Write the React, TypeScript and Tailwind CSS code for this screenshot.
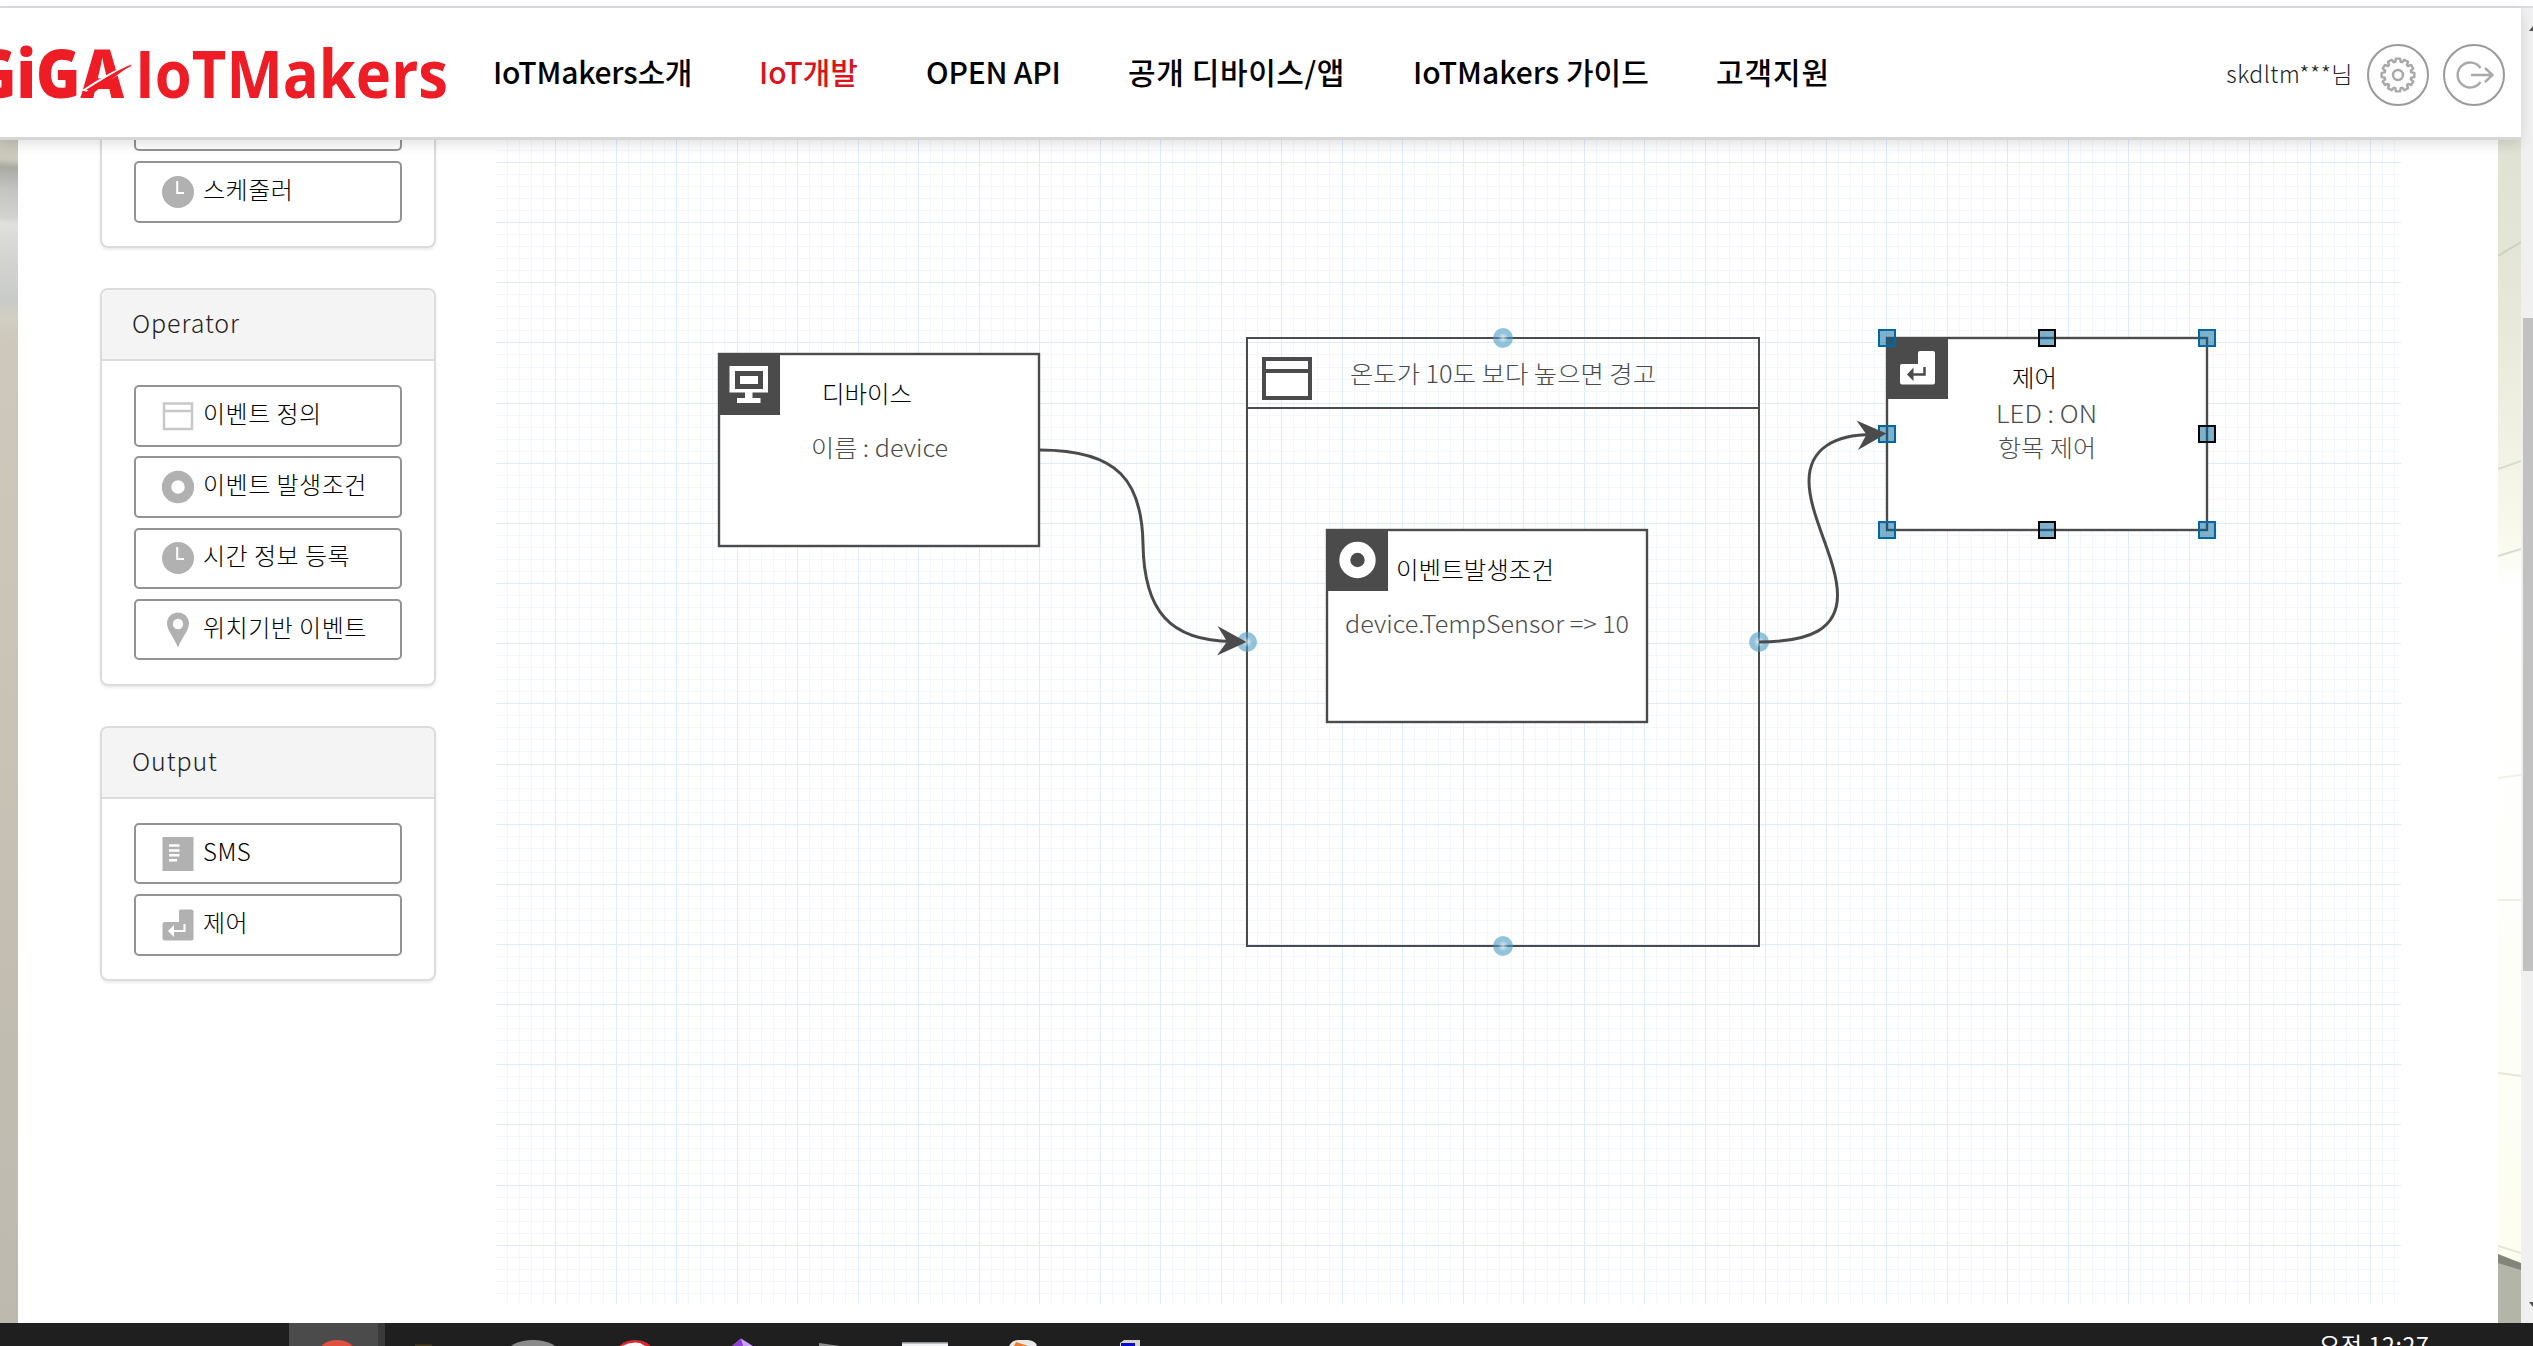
import type { ReactNode } from 'react';

const INK = '#4b4b4b';

/* ---------- Header ---------- */

function Logo() {
  return (
    <svg className="block h-[70px] w-[452px]" viewBox="0 38 452 70" fill="#ee1c25" fontFamily="'Open Sans', 'Noto Sans', sans-serif">
      <text x="-28" y="97.500" fontSize="67" fontWeight="800" textLength="152" lengthAdjust="spacingAndGlyphs">GiGA</text>
      <path d="M84 90 Q108 74 133 63 L132 67 Q112 76 90 92 Z" stroke="#fff" strokeWidth="2" />
      <path d="M80 97 Q104 76 132 64 Q112 79 88 97 Z" />
      <text x="135" y="97.500" fontSize="67" fontWeight="700" textLength="313" lengthAdjust="spacingAndGlyphs">IoTMakers</text>
    </svg>
  );
}

const NAV = [
  { label: 'IoTMakers소개', cls: 'w-[266px] tracking-[-0.2px]' },
  { label: 'IoT개발', cls: 'w-[167px] tracking-[-0.1px] text-[#d9141b]' },
  { label: 'OPEN API', cls: 'w-[202px] tracking-[-0.2px]' },
  { label: '공개 디바이스/앱', cls: 'w-[285px] tracking-[0.6px]' },
  { label: 'IoTMakers 가이드', cls: 'w-[303px] tracking-[0px]' },
  { label: '고객지원', cls: 'w-[200px] tracking-[0.9px]' },
];

function RoundButton({ children }: { children: ReactNode }) {
  return (
    <button className="flex size-[62px] items-center justify-center rounded-full border-2 border-[#9a9a9a] bg-white">{children}</button>
  );
}

function gearPath() {
  const pts: string[] = [];
  const teeth = 12;
  for (let i = 0; i < teeth; i++) {
    const a = (i * 2 * Math.PI) / teeth;
    const at = (r: number, d: number) => `${(18 + r * Math.sin(a + d)).toFixed(2)} ${(18 - r * Math.cos(a + d)).toFixed(2)}`;
    pts.push(at(13.5, -0.2), at(16.5, -0.13), at(16.5, 0.13), at(13.5, 0.2));
  }
  return `M${pts.join(' L')} Z`;
}

function Header() {
  return (
    <header className="relative z-10 flex h-[132px] shrink-0 items-center border-b-[3px] border-[#d6d6d6] bg-white shadow-[0_4px_12px_rgba(0,0,0,0.12)]">
      <Logo />
      <nav className="ml-[41px] flex pb-[2px] text-[30px] font-medium whitespace-nowrap text-black">
        {NAV.map((n) => (
          <a key={n.label} className={n.cls}>
            {n.label}
          </a>
        ))}
      </nav>
      <div className="mt-[4px] mr-4 ml-auto flex items-center">
        <span className="mr-[14px] pb-[2px] text-[23px] font-light tracking-[0.5px] whitespace-nowrap text-[#222]">skdltm***님</span>
        <RoundButton>
          <svg className="size-9" viewBox="0 0 36 36" fill="none" stroke="#a9a9a9" strokeWidth="2.400" strokeLinejoin="round">
            <path d={gearPath()} />
            <circle cx="18" cy="18" r="5" />
          </svg>
        </RoundButton>
        <span className="w-[14px]" />
        <RoundButton>
          <svg className="h-[30px] w-[40px]" viewBox="0 0 40 30" fill="none" stroke="#a9a9a9" strokeWidth="2.400">
            <path d="M26.500 8 A12.500 12.500 0 1 0 26.500 22" />
            <path d="M17 15 H38 M31 8 L38.500 15 L31 22" />
          </svg>
        </RoundButton>
      </div>
    </header>
  );
}

/* ---------- Sidebar ---------- */

const ICON = 'ml-[26px] mr-[9px] h-9 w-8 shrink-0';

function WindowIcon() {
  return (
    <svg className={ICON} viewBox="0 0 32 36" fill="none" stroke="#c8c8c8" strokeWidth="2.500">
      <path d="M2 5.500 H30 V31 H2 Z M2 13 H30" />
    </svg>
  );
}
function RingIcon() {
  return (
    <svg className={ICON} viewBox="0 0 32 36" fill="none" stroke="#b1b1b1" strokeWidth="9.500">
      <circle cx="16" cy="18" r="11.500" />
    </svg>
  );
}
function ClockIcon() {
  return (
    <svg className={ICON} viewBox="0 0 32 36">
      <circle cx="16" cy="18" r="16" fill="#b1b1b1" />
      <path d="M15.200 7 V19 H22" fill="none" stroke="#fff" strokeWidth="2" />
    </svg>
  );
}
function PinIcon() {
  return (
    <svg className={ICON} viewBox="0 0 32 36">
      <path d="M16 0.500 C9.500 0.500 5 5.500 5 11.500 C5 18 10 22 16 35.500 C22 22 27 18 27 11.500 C27 5.500 22.500 0.500 16 0.500 Z" fill="#b1b1b1" />
      <circle cx="16" cy="12" r="5.200" fill="#fff" />
    </svg>
  );
}
function SmsIcon() {
  return (
    <svg className={ICON} viewBox="0 0 32 36">
      <rect x="0.500" y="1" width="31" height="34" fill="#b1b1b1" />
      <path d="M7 9.500 H17.500 M7 14.500 H17.500 M7 19.300 H17.500 M7 24.300 H15" stroke="#fff" strokeWidth="2.400" />
    </svg>
  );
}
function ControlIcon() {
  return (
    <svg className={ICON} viewBox="0 0 32 36">
      <path d="M18.500 2.500 H29.500 Q31.500 2.500 31.500 4.500 V31.500 Q31.500 33.500 29.500 33.500 H2.500 Q0.500 33.500 0.500 31.500 V17 Q0.500 15 2.500 15 H17 V4 Q17 2.500 18.500 2.500 Z" fill="#b1b1b1" />
      <path d="M22.500 17 V24 H9" fill="none" stroke="#fff" strokeWidth="2.200" />
      <path d="M6 24 L12 18 V30 Z" fill="#fff" />
    </svg>
  );
}

function Tool({ icon, children }: { icon: ReactNode; children: string }) {
  return (
    <div className="flex h-[61.5px] w-[268px] shrink-0 items-center rounded-[5px] border-2 border-[#939393] bg-white text-[24px] font-light tracking-[0.5px] whitespace-pre text-black">
      {icon}
      <span className="pb-[6px]">{children}</span>
    </div>
  );
}

function Panel({ title, children }: { title: string; children: ReactNode }) {
  return (
    <section className="w-[336px] overflow-hidden rounded-lg border-2 border-[#dcdcdc] bg-white shadow-[0_2px_3px_rgba(0,0,0,0.08)]">
      <h2 className="flex h-[71px] items-center border-b-2 border-[#dcdcdc] bg-[#f4f4f4] pb-[3px] pl-[30px] text-[25px] font-light tracking-[0.9px] text-[#222]">{title}</h2>
      <div className="flex flex-col items-center gap-[9.83px] pt-[24px] pb-[23.5px]">{children}</div>
    </section>
  );
}

function Sidebar() {
  return (
    <aside className="ml-[82px] flex w-[336px] shrink-0 flex-col gap-10">
      <section className="flex h-[108px] flex-col items-center justify-end gap-[9.83px] overflow-hidden rounded-b-lg border-2 border-t-0 border-[#dcdcdc] pb-[23.5px] shadow-[0_2px_3px_rgba(0,0,0,0.08)]">
        <Tool icon={<ClockIcon />}>{' '}</Tool>
        <Tool icon={<ClockIcon />}>스케줄러</Tool>
      </section>
      <Panel title="Operator">
        <Tool icon={<WindowIcon />}>이벤트 정의</Tool>
        <Tool icon={<RingIcon />}>이벤트 발생조건</Tool>
        <Tool icon={<ClockIcon />}>시간 정보 등록</Tool>
        <Tool icon={<PinIcon />}>위치기반 이벤트</Tool>
      </Panel>
      <Panel title="Output">
        <Tool icon={<SmsIcon />}>SMS</Tool>
        <Tool icon={<ControlIcon />}>제어</Tool>
      </Panel>
    </aside>
  );
}

/* ---------- Diagram ---------- */

const X0 = 495;
const Y0 = 162;

function Grid() {
  const minor: ReactNode[] = [];
  const major: ReactNode[] = [];
  for (let i = 1; i <= 157; i++) {
    const x = Math.floor(X0 + i * 12.1);
    (i % 5 ? minor : major).push(<rect key={`v${i}`} x={x} y="140" width="1" height="1164" />);
  }
  for (let j = -1; j <= 94; j++) {
    const y = Math.round(Y0 + j * 12.03);
    (j % 5 ? minor : major).push(<rect key={`h${j}`} x="496" y={y} width="1905" height="1" />);
  }
  return (
    <g shapeRendering="crispEdges">
      <g fill="#f1f7fc">{minor}</g>
      <g fill="#dcecf9">{major}</g>
    </g>
  );
}

function NodeBox({ x, y }: { x: number; y: number }) {
  return (
    <g>
      <rect x={x + 1} y={y + 1} width="320" height="192" fill="#fff" stroke={INK} strokeWidth="2.400" />
      <rect x={x} y={y} width="62" height="62" fill={INK} />
    </g>
  );
}

function Label({ x, y, w, dark, children }: { x: number; y: number; w: number; dark?: boolean; children: string }) {
  return (
    <text x={x} y={y} textLength={w} lengthAdjust="spacingAndGlyphs" fill={dark ? '#000' : INK}>
      {children}
    </text>
  );
}

const PORTS = [
  [1503, 338],
  [1247, 642],
  [1759, 642],
  [1503, 946],
];
const HANDLES: [number, number, string][] = [
  [1887, 338, '#00699f'],
  [2047, 338, '#000'],
  [2207, 338, '#00699f'],
  [1887, 434, '#00699f'],
  [2207, 434, '#000'],
  [1887, 530, '#00699f'],
  [2047, 530, '#000'],
  [2207, 530, '#00699f'],
];

function Diagram() {
  return (
    <svg className="ml-[59px] h-[1164px] w-[1906px] shrink-0" viewBox="495 140 1906 1164" fontSize="24" fontWeight="300">
      <defs>
        <radialGradient id="port">
          <stop offset="0" stopColor="#e4f0f6" stopOpacity="0.750" />
          <stop offset="0.550" stopColor="#4b9cc3" stopOpacity="0.600" />
          <stop offset="1" stopColor="#4b9cc3" stopOpacity="0.600" />
        </radialGradient>
      </defs>
      <Grid />

      <g fill="none" stroke={INK} strokeWidth="2">
        <rect x="1247" y="338" width="512" height="608" />
        <path d="M1247 408 H1759" />
      </g>
      <g fill="#fff" stroke={INK} strokeWidth="4">
        <rect x="1264" y="359" width="46" height="39" />
        <path d="M1264 371 H1310" />
      </g>
      <Label x={1350} y={383} w={306}>온도가 10도 보다 높으면 경고</Label>

      <NodeBox x={718} y={353} />
      <path d="M729.500 366 H768 V392.500 H752.500 V398 H760.500 V403 H737 V398 H745 V392.500 H729.500 Z" fill="#fff" />
      <rect x="737.500" y="373.500" width="23" height="13" fill="#fff" stroke={INK} strokeWidth="5" />
      <Label x={822} y={403} w={90} dark>디바이스</Label>
      <Label x={811} y={457} w={137}>이름 : device</Label>

      <NodeBox x={1326} y={529} />
      <circle cx="1357.500" cy="560" r="12.700" fill="none" stroke="#fff" strokeWidth="11" />
      <Label x={1396} y={579} w={158} dark>이벤트발생조건</Label>
      <Label x={1345} y={633} w={284}>{'device.TempSensor => 10'}</Label>

      <NodeBox x={1886} y={337} />
      <path d="M1920 351 H1933 Q1935 351 1935 353 V382.500 Q1935 384.500 1933 384.500 H1902 Q1900 384.500 1900 382.500 V366 Q1900 364 1902 364 H1918 V353 Q1918 351 1920 351 Z" fill="#fff" />
      <path d="M1924.500 367 V374.500 H1910" fill="none" stroke={INK} strokeWidth="2.500" />
      <path d="M1907 374.500 L1913.500 367.500 V381 Z" fill={INK} />
      <Label x={2012} y={387} w={45} dark>제어</Label>
      <Label x={1996} y={423} w={101}>LED : ON</Label>
      <Label x={1998} y={457} w={98}>항목 제어</Label>

      {PORTS.map(([x, y]) => (
        <circle key={`${x}-${y}`} cx={x} cy={y} r="10" fill="url(#port)" />
      ))}
      {HANDLES.map(([x, y, c]) => (
        <rect key={`${x}-${y}`} x={x - 8} y={y - 8} width="16" height="16" fill="#00649b" fillOpacity="0.500" stroke={c} strokeWidth="2" />
      ))}

      <g fill="none" stroke={INK} strokeWidth="3">
        <path d="M1040 450 C1119 450 1142 482 1143 544 C1144 610 1169 641 1232 641.500" />
        <path d="M1759 642 C1812 642 1837.500 628 1837.500 595 C1837.500 560 1809 516 1809 481 C1809 448 1836 434.500 1872 434.500" />
      </g>
      <g fill={INK}>
        <path d="M1246.500 642 L1217.500 626 L1227 641.500 L1217 655.500 Z" />
        <path d="M1886.500 433.500 L1856.500 420.500 L1866.500 434.500 L1858 450 Z" />
      </g>
    </svg>
  );
}

/* ---------- Surroundings ---------- */

function LeftPhoto() {
  return (
    <div className="w-[18px] shrink-0 bg-[linear-gradient(185deg,#cac8ba_0px,#cbc9bc_20px,#a9aaa4_28px,#c4c5c1_50px,#d2d3cf_78px,#e0e1dd_84px,#d6d7d3_110px,#c9cbc8_160px,#d2cfc3_178px,#cdc8bb_200px,#cbc5b8_500px,#c3beb1_800px,#bdb9af_1183px)]" />
  );
}

function RightPhoto() {
  return (
    <svg className="block h-[1183px] w-[23px] shrink-0" viewBox="0 0 23 1183" preserveAspectRatio="none">
      <defs>
        <linearGradient id="wall" x1="0" y1="0" x2="0" y2="1">
          <stop offset="0" stopColor="#dfe2d2" />
          <stop offset="0.120" stopColor="#e5e6d6" />
          <stop offset="0.270" stopColor="#f2f3e4" />
          <stop offset="0.340" stopColor="#fafbee" />
          <stop offset="0.380" stopColor="#ffffff" />
          <stop offset="0.650" stopColor="#fefefa" />
          <stop offset="0.930" stopColor="#fdfef0" />
          <stop offset="1" stopColor="#fbfbec" />
        </linearGradient>
      </defs>
      <rect width="23" height="1183" fill="url(#wall)" />
      <g fill="none" strokeWidth="2">
        <path d="M0 116 L23 102" stroke="#cfd1c4" />
        <path d="M0 329 L23 321 M0 416 L23 409" stroke="#d9dbd0" />
        <path d="M0 638 L23 635 M0 760 H23" stroke="#f1f1e4" />
        <path d="M0 933 L23 936 M0 1106 L23 1113" stroke="#e6e7d9" />
      </g>
      <path d="M0 1115 L23 1124 V1183 H0 Z" fill="#b3b5a8" />
      <path d="M0 1114 L23 1123 V1130 L0 1123 Z" fill="#84857a" />
    </svg>
  );
}

function Scrollbar() {
  return (
    <div className="flex w-3 shrink-0 flex-col items-end overflow-hidden bg-[#f0f0f0]">
      <svg className="mt-[18px] h-[6px] w-[4px]" viewBox="0 0 4 6">
        <path d="M0 5 L4 0 V5 Z" fill="#505050" />
      </svg>
      <div className="mt-[286px] h-[653px] w-[10px] bg-[#c1c1c1]" />
      <svg className="mt-[331px] h-[6px] w-[4px]" viewBox="0 0 4 6">
        <path d="M0 0 L4 5 V0 Z" fill="#505050" />
      </svg>
    </div>
  );
}

function Taskbar() {
  return (
    <footer className="relative flex h-[23px] shrink-0 overflow-hidden bg-[#1f1f1f]">
      <svg className="block h-[23px] w-[1300px]" viewBox="0 0 1300 23">
        <rect x="289" width="89" height="23" fill="#4b4b4b" />
        <rect x="378" width="7" height="23" fill="#3a3a3a" />
        <ellipse cx="337" cy="31" rx="19" ry="14" fill="#e0503f" />
        <rect x="415" y="21.500" width="17" height="2" fill="#4d3d1b" />
        <ellipse cx="533" cy="30" rx="26" ry="13" fill="#8b8b8b" />
        <ellipse cx="635" cy="31" rx="19" ry="14" fill="#d8282f" />
        <path d="M622 23 Q631 18 640 20 L645 23 Z" fill="#fff" />
        <path d="M741 15.500 L753 23 H732 Z" fill="#c9a0ff" />
        <path d="M741 15.500 L743 23 H732 Z" fill="#8a3fd0" />
        <path d="M819 20 L840 23 H819 Z" fill="#8d8d8d" />
        <rect x="902" y="19" width="46" height="4" fill="#f0f2f5" />
        <rect x="902" y="19" width="46" height="1.500" fill="#8a8f98" />
        <path d="M1009 23 Q1012 17 1018 17 H1028 Q1036 18 1037 23 Z" fill="#e9e9e6" />
        <path d="M1014 23 L1016 19 L1028 23 Z" fill="#f07a2b" />
        <path d="M1120 20 L1124 17 H1140 V23 H1120 Z" fill="#d6d6cf" />
        <rect x="1121" y="20" width="14" height="3" fill="#0a0ad0" />
      </svg>
      <span className="mt-[6px] ml-[1019px] text-[23px] leading-[30px] tracking-[0.7px] whitespace-nowrap text-white">오전 12:27</span>
    </footer>
  );
}

export default function App() {
  return (
    <div className="flex h-[1346px] w-[2533px] flex-col overflow-hidden bg-white font-['Noto_Sans_CJK_KR',sans-serif]">
      <div className="h-2 shrink-0 border-b-2 border-[#dcdce0]" />
      <div className="flex h-[1315px] shrink-0">
        <div className="flex w-[2521px] flex-col">
          <Header />
          <main className="flex h-[1183px]">
            <LeftPhoto />
            <div className="flex w-[2480px] shrink-0 items-start overflow-hidden bg-white">
              <Sidebar />
              <Diagram />
            </div>
            <RightPhoto />
          </main>
        </div>
        <Scrollbar />
      </div>
      <Taskbar />
    </div>
  );
}
